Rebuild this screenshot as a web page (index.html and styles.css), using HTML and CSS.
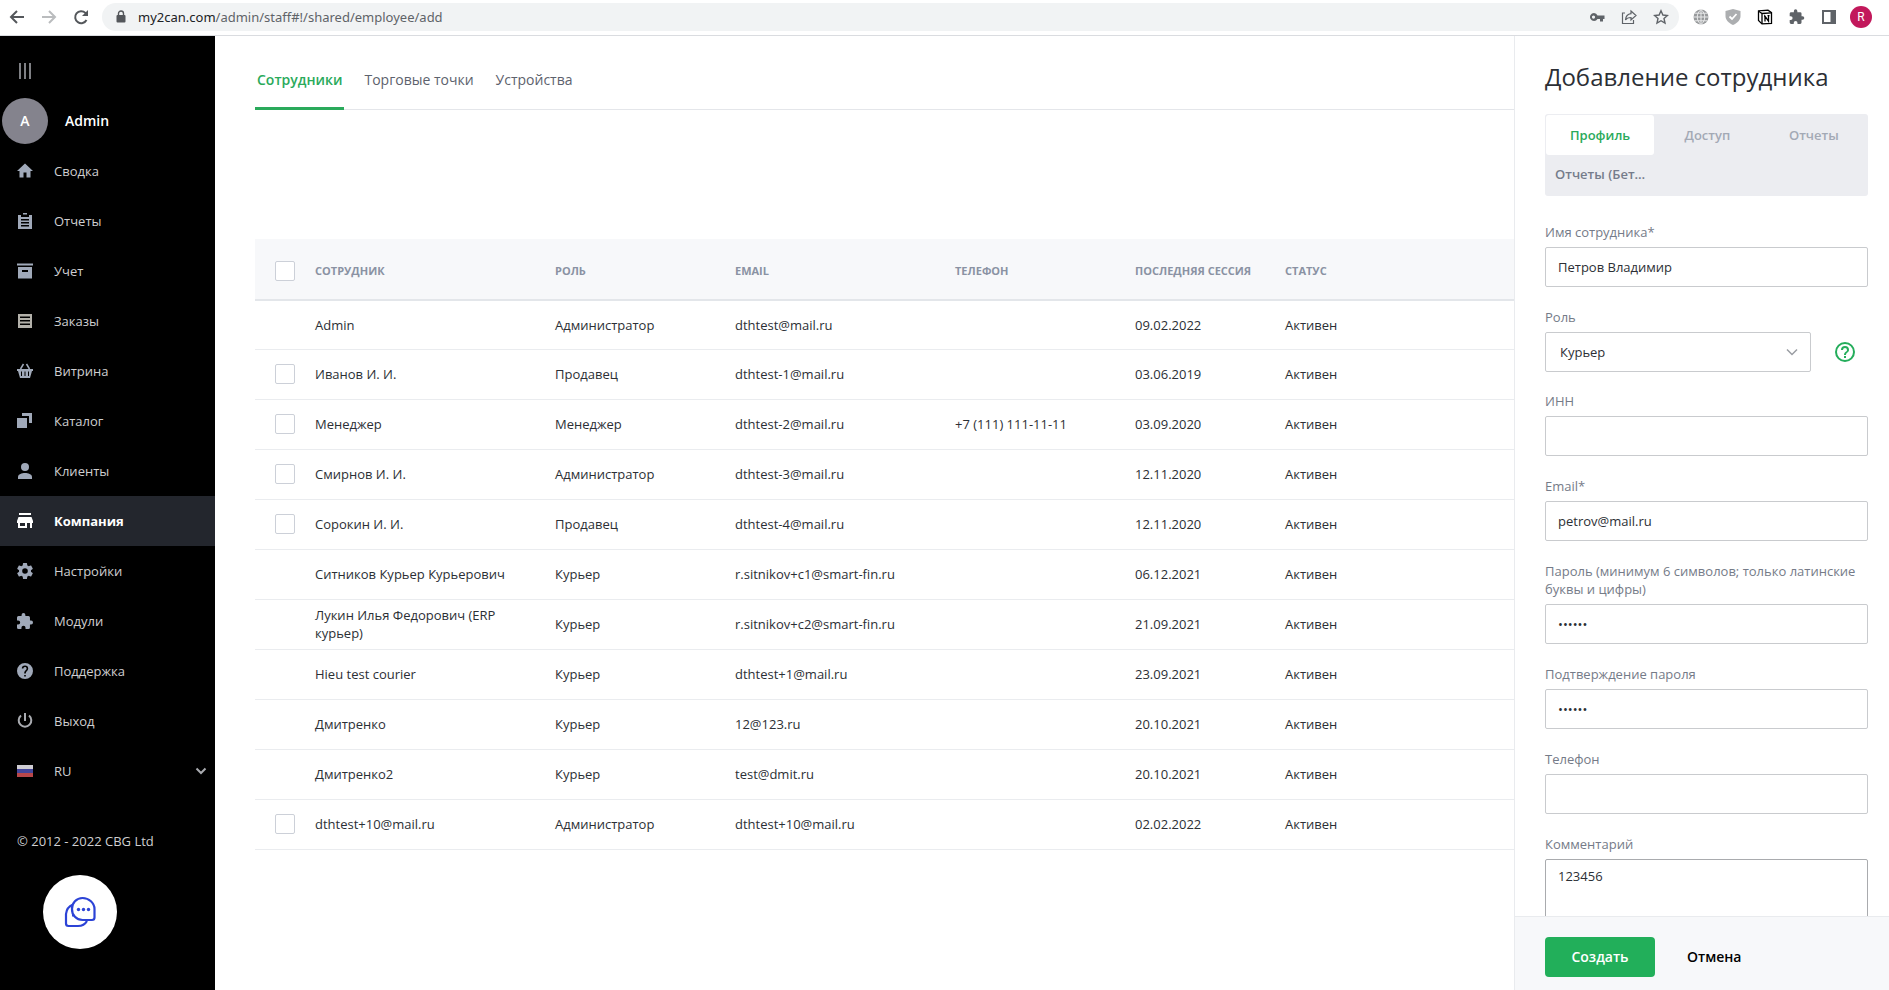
FILE: index.html
```html
<!DOCTYPE html>
<html lang="ru">
<head>
<meta charset="utf-8">
<title>Сотрудники</title>
<link rel="stylesheet" href="styles.css">
</head>
<body>
<header class="browser">
  <button class="nav-btn" aria-label="Назад"><svg width="18" height="18" viewBox="0 0 18 18" fill="none" stroke="#54575b" stroke-width="2"><path d="M16 9H3M9 3L3 9l6 6"/></svg></button>
  <button class="nav-btn" aria-label="Вперед"><svg width="18" height="18" viewBox="0 0 18 18" fill="none" stroke="#babcbe" stroke-width="2"><path d="M2 9h13M9 3l6 6-6 6"/></svg></button>
  <button class="nav-btn" aria-label="Обновить"><svg width="18" height="18" viewBox="0 0 18 18" fill="none" stroke="#54575b" stroke-width="2"><path d="M14.5 12A6 6 0 1 1 13.4 4.9L15 6.5"/><path d="M16 2v6h-6z" fill="#54575b" stroke="none"/></svg></button>
  <div class="address">
    <svg width="10" height="14" viewBox="0 0 10 14"><rect x="0.5" y="5" width="9" height="7.500" rx="1" fill="#54575b"/><path d="M2.500 5.500V3.500a2.500 2.500 0 0 1 5 0v2" fill="none" stroke="#54575b" stroke-width="1.400"/></svg>
    <span class="url"><span class="host">my2can.com</span>/admin/staff#!/shared/employee/add</span>
    <svg width="16" height="16" viewBox="0 0 16 16" fill="#5f6368"><path fill-rule="evenodd" d="M5 4a4 4 0 1 0 3.500 6H11v2.500h3V10h1.500V6.500h-7A4 4 0 0 0 5 4zM4.500 6.500a1.600 1.600 0 1 1 0 3.200 1.600 1.600 0 0 1 0-3.200z"/></svg>
    <svg width="16" height="16" viewBox="0 0 16 16" fill="none" stroke="#5f6368" stroke-width="1.200"><path d="M4 4H1.500v10.500h11V11M10 2l5 4.500-5 4.500V8.500c-3 0-4.500.8-5.500 2.500.3-4 2.500-6 5.500-6.300z"/></svg>
    <svg width="16" height="16" viewBox="0 0 16 16" fill="none" stroke="#5f6368" stroke-width="1.400"><path d="M8 1.800l1.900 4.200 4.500.5-3.400 3 1 4.500L8 11.700 4 14l1-4.500-3.400-3L6.100 6z"/></svg>
  </div>
  <div class="extensions">
    <svg width="16" height="16" viewBox="0 0 16 16"><circle cx="8" cy="8" r="7.500" fill="#97999b"/><path d="M8 0v16M0 8h16M1.500 4.200h13M1.500 11.800h13M8 .5c-5 4-5 11 0 15M8 .5c5 4 5 11 0 15" fill="none" stroke="#e8e9ea"/></svg>
    <svg width="16" height="16" viewBox="0 0 16 16"><path d="M8 0l7.500 2v5c0 4-3 7-7.500 9C3.500 14 .5 11 .5 7V2z" fill="#acaeb0"/><path d="M4.500 7.500l2.500 2.500 4.500-5" fill="none" stroke="#fff" stroke-width="1.800"/></svg>
    <svg width="16" height="16" viewBox="0 0 16 16" fill="#fff" stroke="#000" stroke-width="1.300"><path d="M1.500 2l9.500-.8 3.500 2.500V14.500l-9.500.4-3.500-3.500z"/><path d="M1.500 2L5 4.500l9.500-.6M5 4.500V15"/><path d="M8 12.500V7.200l3.500 5V6.700M7 7.200h1.500M10.500 6.700h2" fill="none"/></svg>
    <svg width="16" height="16" viewBox="1 1 23 22" fill="#5f6368"><path d="M20.500 11H19V7a2 2 0 0 0-2-2h-4V3.500a2.500 2.500 0 0 0-5 0V5H4a2 2 0 0 0-2 2v3.800h1.500a2.700 2.700 0 0 1 0 5.400H2V20a2 2 0 0 0 2 2h3.800v-1.500a2.700 2.700 0 0 1 5.400 0V22H17a2 2 0 0 0 2-2v-4h1.500a2.500 2.500 0 0 0 0-5z"/></svg>
    <svg width="16" height="16" viewBox="0 0 16 16"><path d="M2 2h12v12H2z" fill="none" stroke="#5f6368" stroke-width="2"/><path d="M9.500 2H14v12H9.500z" fill="#5f6368"/></svg>
  </div>
  <span class="profile">R</span>
</header>
<div class="app">
  <nav class="sidebar">
    <button class="burger" aria-label="Меню"><svg width="14" height="16" viewBox="0 0 14 16" stroke="#a9abb0" stroke-width="1.500"><path d="M2 0v16M7 0v16M12 0v16"/></svg></button>
    <div class="user"><span class="avatar">A</span><span>Admin</span></div>
    <a class="item" href="#"><svg viewBox="0 0 16 16"><path d="M8 .5L0 8h2.500v6.500h4v-5h3v5h4V8H16z"/></svg>Сводка</a>
    <a class="item" href="#"><svg viewBox="0 0 16 16"><path fill-rule="evenodd" d="M6 0h4v1.500H6zM1 2h3v2h8V2h3v14H1zM4 6v1.500h8V6zM4 9v1.500h8V9zM4 12v1.500h8V12z"/></svg>Отчеты</a>
    <a class="item" href="#"><svg viewBox="0 0 16 16"><path fill-rule="evenodd" d="M0 .5h16v2H0zM1 4h14v11.500H1zM5 7v2h6V7z"/></svg>Учет</a>
    <a class="item orders" href="#"><svg viewBox="0 0 16 16"><path fill-rule="evenodd" d="M1 1h14v14H1zM3 3.500V5h10V3.500zM3 7v1.500h10V7zM3 10.500V12h10v-1.500z"/></svg>Заказы</a>
    <a class="item" href="#"><svg viewBox="0 0 16 16"><path fill-rule="evenodd" d="M0 6h16v2h-1l-2 7H3L1 8H0zM4 8.500V13h1V8.500zM7.500 8.500V13h1V8.500zM11 8.500V13h1V8.500z"/><path d="M3.500 6l3-5M12.500 6l-3-5" fill="none" stroke="currentColor" stroke-width="1.500"/></svg>Витрина</a>
    <a class="item" href="#"><svg viewBox="0 0 16 16"><path d="M0 5h10v10H0zM5 0h10v10h-3V3H5z"/></svg>Каталог</a>
    <a class="item" href="#"><svg viewBox="0 0 16 16"><circle cx="8" cy="4" r="4"/><path d="M1 16v-2c0-3 4-4 7-4s7 1 7 4v2z"/></svg>Клиенты</a>
    <a class="item active" href="#"><svg viewBox="0 0 16 16"><path fill-rule="evenodd" d="M2 0h12v2H2zM1.500 4h13L16 8v2h-1v5h-2v-5h-3v5H1v-5H0V8zM3 10v3h5v-3z"/></svg>Компания</a>
    <a class="item" href="#"><svg viewBox="2 2 20 20"><path d="M19.430 12.980c.04-.320.070-.640.070-.980s-.03-.660-.07-.980l2.110-1.650a.5.5 0 0 0 .12-.640l-2-3.460a.5.5 0 0 0-.61-.220l-2.490 1c-.52-.400-1.080-.730-1.690-.980l-.38-2.650A.5.5 0 0 0 14 2h-4a.5.5 0 0 0-.49.420l-.38 2.650c-.61.250-1.170.590-1.690.980l-2.490-1a.5.5 0 0 0-.61.220l-2 3.460a.5.5 0 0 0 .12.640l2.110 1.650a8 8 0 0 0 0 1.960l-2.110 1.650a.5.5 0 0 0-.12.640l2 3.460c.12.220.39.300.61.220l2.490-1c.52.400 1.080.730 1.690.980l.38 2.650c.03.240.24.420.49.420h4c.25 0 .46-.18.49-.420l.38-2.650c.61-.250 1.170-.590 1.690-.980l2.490 1c.23.090.49 0 .61-.220l2-3.460a.5.5 0 0 0-.12-.640zM12 15.500a3.500 3.500 0 1 1 0-7 3.500 3.500 0 0 1 0 7z"/></svg>Настройки</a>
    <a class="item" href="#"><svg viewBox="2 1 21 21"><path d="M20.500 11H19V7a2 2 0 0 0-2-2h-4V3.500a2.500 2.500 0 0 0-5 0V5H4a2 2 0 0 0-2 2v3.800h1.500a2.700 2.700 0 0 1 0 5.400H2V20a2 2 0 0 0 2 2h3.800v-1.500a2.700 2.700 0 0 1 5.400 0V22H17a2 2 0 0 0 2-2v-4h1.500a2.500 2.500 0 0 0 0-5z"/></svg>Модули</a>
    <a class="item" href="#"><svg viewBox="2 2 20 20"><path d="M12 2a10 10 0 1 0 0 20 10 10 0 0 0 0-20zm1 17h-2v-2h2zm2.070-7.750l-.9.920C13.450 12.900 13 13.500 13 15h-2v-.5c0-1.100.45-2.100 1.170-2.830l1.240-1.260A2 2 0 1 0 10 9H8a4 4 0 0 1 8 0c0 .880-.36 1.680-.93 2.250z"/></svg>Поддержка</a>
    <a class="item" href="#"><svg viewBox="0 0 16 16" class="line"><path d="M8 0v8M4 2.500a6.300 6.300 0 1 0 8 0"/></svg>Выход</a>
    <button class="item lang"><svg viewBox="0 0 16 16"><path d="M0 2h16v4H0z" fill="#cfcdd3"/><path d="M0 6h16v4H0z" fill="#44459a"/><path d="M0 10h16v4H0z" fill="#b8474a"/></svg>RU<svg class="chevron line" viewBox="0 0 16 16"><path d="M3.500 5.500L8 10l4.500-4.500"/></svg></button>
    <p class="copyright">© 2012 - 2022 CBG Ltd</p>
    <button class="chat" aria-label="Чат"><svg width="32" height="32" viewBox="0 0 32 32" fill="none" stroke="#2c43d6" stroke-width="2.200"><path d="M9 8.500A11.500 11.500 0 0 0 2 18v9.500a2.500 2.500 0 0 0 2.500 2.500H14c4 0 7-1.500 9-5"/><path d="M18.500 2C25 2 30.500 7 30.500 13v8.500a2.500 2.500 0 0 1-2.500 2.500h-9.500A10.500 10.500 0 0 1 8 13 10.500 10.500 0 0 1 18.500 2z"/><path d="M8 19.500h1.500" /><g fill="#2c43d6" stroke="none"><circle cx="14.500" cy="13.500" r="1.700"/><circle cx="19.500" cy="13.500" r="1.700"/><circle cx="24.500" cy="13.500" r="1.700"/></g></svg></button>
  </nav>
  <main class="content">
    <nav class="tabs">
      <a class="tab current" href="#">Сотрудники</a>
      <a class="tab" href="#">Торговые точки</a>
      <a class="tab" href="#">Устройства</a>
    </nav>
    <table class="staff">
      <colgroup><col class="c-check"><col class="c-name"><col class="c-role"><col class="c-mail"><col class="c-phone"><col class="c-date"><col></colgroup>
      <thead><tr><th><input type="checkbox" aria-label="Выбрать всех"></th><th>СОТРУДНИК</th><th>РОЛЬ</th><th>EMAIL</th><th>ТЕЛЕФОН</th><th>ПОСЛЕДНЯЯ СЕССИЯ</th><th>СТАТУС</th></tr></thead>
      <tbody>
        <tr><td></td><td>Admin</td><td>Администратор</td><td>dthtest@mail.ru</td><td></td><td>09.02.2022</td><td>Активен</td></tr>
        <tr><td><input type="checkbox" aria-label="Иванов И. И."></td><td>Иванов И. И.</td><td>Продавец</td><td>dthtest-1@mail.ru</td><td></td><td>03.06.2019</td><td>Активен</td></tr>
        <tr><td><input type="checkbox" aria-label="Менеджер"></td><td>Менеджер</td><td>Менеджер</td><td>dthtest-2@mail.ru</td><td>+7 (111) 111-11-11</td><td>03.09.2020</td><td>Активен</td></tr>
        <tr><td><input type="checkbox" aria-label="Смирнов И. И."></td><td>Смирнов И. И.</td><td>Администратор</td><td>dthtest-3@mail.ru</td><td></td><td>12.11.2020</td><td>Активен</td></tr>
        <tr><td><input type="checkbox" aria-label="Сорокин И. И."></td><td>Сорокин И. И.</td><td>Продавец</td><td>dthtest-4@mail.ru</td><td></td><td>12.11.2020</td><td>Активен</td></tr>
        <tr><td></td><td>Ситников Курьер Курьерович</td><td>Курьер</td><td>r.sitnikov+c1@smart-fin.ru</td><td></td><td>06.12.2021</td><td>Активен</td></tr>
        <tr><td></td><td>Лукин Илья Федорович (ERP курьер)</td><td>Курьер</td><td>r.sitnikov+c2@smart-fin.ru</td><td></td><td>21.09.2021</td><td>Активен</td></tr>
        <tr><td></td><td>Hieu test courier</td><td>Курьер</td><td>dthtest+1@mail.ru</td><td></td><td>23.09.2021</td><td>Активен</td></tr>
        <tr><td></td><td>Дмитренко</td><td>Курьер</td><td>12@123.ru</td><td></td><td>20.10.2021</td><td>Активен</td></tr>
        <tr><td></td><td>Дмитренко2</td><td>Курьер</td><td>test@dmit.ru</td><td></td><td>20.10.2021</td><td>Активен</td></tr>
        <tr><td><input type="checkbox" aria-label="dthtest+10@mail.ru"></td><td>dthtest+10@mail.ru</td><td>Администратор</td><td>dthtest+10@mail.ru</td><td></td><td>02.02.2022</td><td>Активен</td></tr>
      </tbody>
    </table>
  </main>
  <form class="panel">
    <div class="panel-body">
      <h1>Добавление сотрудника</h1>
      <div class="switch">
        <button type="button" class="on">Профиль</button>
        <button type="button">Доступ</button>
        <button type="button">Отчеты</button>
        <button type="button" class="beta">Отчеты (Бет…</button>
      </div>
      <label for="name">Имя сотрудника*</label>
      <input id="name" type="text" value="Петров Владимир">
      <label for="role">Роль</label>
      <div class="role-row">
        <div class="select">
          <select id="role"><option>Курьер</option></select>
          <svg width="12" height="12" viewBox="0 0 12 12" fill="none" stroke="#9a9da3" stroke-width="1.500"><path d="M1 3.500l5 5 5-5"/></svg>
        </div>
        <button type="button" class="help" aria-label="Справка"><svg width="20" height="20" viewBox="2 2 20 20" fill="#24ad5b"><path d="M11 18h2v-2h-2zm1-16a10 10 0 1 0 0 20 10 10 0 0 0 0-20zm0 18a8 8 0 1 1 0-16 8 8 0 0 1 0 16zm0-14a4 4 0 0 0-4 4h2a2 2 0 1 1 4 0c0 2-3 1.750-3 5h2c0-2.250 3-2.500 3-5a4 4 0 0 0-4-4z"/></svg></button>
      </div>
      <label for="inn">ИНН</label>
      <input id="inn" type="text">
      <label for="email">Email*</label>
      <input id="email" type="text" value="petrov@mail.ru">
      <label for="pass">Пароль (минимум 6 символов; только латинские буквы и цифры)</label>
      <input id="pass" type="password" value="123456">
      <label for="pass2">Подтверждение пароля</label>
      <input id="pass2" type="password" value="123456">
      <label for="phone">Телефон</label>
      <input id="phone" type="text">
      <label for="comment">Комментарий</label>
      <textarea id="comment">123456</textarea>
    </div>
    <footer class="actions">
      <button type="button" class="create">Создать</button>
      <button type="button" class="cancel">Отмена</button>
    </footer>
  </form>
</div>
</body>
</html>
```
FILE: styles.css
```css
* { box-sizing: border-box; }
body {
  margin: 0;
  height: 100vh;
  display: flex;
  flex-direction: column;
  overflow: hidden;
  background: #fff;
  color: #2c2f35;
  font: 13px/18px "Open Sans", sans-serif;
}
button, input, select, textarea { font: inherit; color: inherit; }
button { padding: 0; border: 0; background: none; }
a { color: inherit; text-decoration: none; }
svg { flex: none; }

.browser {
  flex: none;
  display: flex;
  align-items: center;
  height: 36px;
  padding: 0 17px 2px 8px;
  border-bottom: 1px solid #dadce0;
}
.nav-btn { display: flex; margin-right: 14px; }
.nav-btn:nth-of-type(3) { margin-right: 12px; }
.address {
  flex: 1;
  display: flex;
  align-items: center;
  gap: 16px;
  height: 28px;
  padding: 0 10px 0 14px;
  border-radius: 14px;
  background: #f1f3f4;
}
.url { flex: 1; margin-left: -4px; font-family: "Noto Sans", sans-serif; color: #5f6368; }
.host { color: #202124; }
.extensions { display: flex; align-items: center; gap: 16px; margin: 0 13px 0 14px; }
.profile {
  width: 22px;
  height: 22px;
  border-radius: 50%;
  background: #c2185b;
  color: #fff;
  font: 12px/22px Roboto, sans-serif;
  text-align: center;
}

.app { flex: 1; min-height: 0; display: flex; }
.sidebar {
  flex: none;
  width: 215px;
  background: #000;
  color: #cfcfd1;
}
.burger { display: flex; padding: 27px 18px 19px; }
.user {
  display: flex;
  align-items: center;
  gap: 17px;
  padding: 0 2px 2px;
  color: #fff;
  font-size: 14px;
  font-weight: 600;
}
.avatar {
  width: 46px;
  height: 46px;
  border-radius: 50%;
  background: #84838d;
  line-height: 46px;
  text-align: center;
}
.item {
  display: flex;
  align-items: center;
  gap: 21px;
  width: 100%;
  height: 50px;
  padding: 0 6px 0 17px;
}
.item svg { width: 16px; height: 16px; fill: #a0a9b9; color: #a0a9b9; }
.item.orders svg { fill: #b3b1aa; }
.item.active { background: #23262d; color: #fff; font-weight: 700; }
.item.active svg { fill: #fff; }
.item svg.line { fill: none; stroke: #a9abb0; stroke-width: 2; }
.item .chevron { margin-left: auto; }
.copyright { margin: 36px 17px 25px; }
.chat {
  display: flex;
  align-items: center;
  justify-content: center;
  width: 74px;
  height: 74px;
  margin-left: 43px;
  border-radius: 50%;
  background: #fff;
}

.content { flex: 1; min-width: 0; overflow: hidden; padding-left: 40px; }
.tabs {
  display: flex;
  gap: 18px;
  height: 74px;
  margin-bottom: 129px;
  border-bottom: 1px solid #e4e6ea;
  font-size: 14px;
  color: #5d626d;
}
.tab { height: 74px; padding: 35px 2px 0; }
.tab.current { border-bottom: 3px solid #2aaa5b; color: #2aaa5b; font-weight: 600; }

.staff { width: 100%; table-layout: fixed; border-collapse: separate; border-spacing: 0; }
.c-check { width: 60px; }
.c-name { width: 240px; }
.c-role, .c-phone { width: 180px; }
.c-mail { width: 220px; }
.c-date { width: 150px; }
.staff th {
  height: 62px;
  padding: 4px 0 0;
  border-bottom: 2px solid #e3e6ea;
  background: #f7f8fa;
  color: #8a92a3;
  font-size: 11px;
  font-weight: 700;
  text-align: left;
  white-space: nowrap;
}
.staff td { height: 50px; padding: 0 40px 1px 0; border-bottom: 1px solid #eaecef; }
.staff tr:first-child td { height: 49px; }
.staff td:first-child, .staff th:first-child { padding-left: 20px; padding-right: 0; }
.staff td:nth-child(4), .staff td:nth-child(5) { padding-right: 0; }
.staff input {
  appearance: none;
  display: block;
  width: 20px;
  height: 20px;
  margin: 0;
  border: 1px solid #ccd0d8;
  border-radius: 2px;
  background: #fff;
}

.panel {
  flex: none;
  display: flex;
  flex-direction: column;
  width: 375px;
  border-left: 1px solid #e9ebee;
}
.panel-body { flex: 1; min-height: 0; overflow: hidden; padding: 25px 21px 0 30px; }
h1 { margin: 0 0 21px; font-size: 24px; line-height: 32px; font-weight: 400; }
.switch {
  display: grid;
  grid-template-columns: repeat(3, 1fr);
  margin-bottom: 27px;
  padding: 1px;
  border-radius: 3px;
  background: #ecedf1;
  color: #a3a9b5;
}
.switch button {
  height: 40px;
  padding: 0 9px;
  border-radius: 3px;
  font-weight: 600;
  white-space: nowrap;
}
.switch .on { background: #fff; color: #2aaa5b; }
.switch .beta { padding-bottom: 2px; color: #757c8b; text-align: left; }
label { display: block; margin-bottom: 6px; color: #757b88; }
.panel input, .panel select, .panel textarea {
  display: block;
  width: 100%;
  height: 40px;
  margin: 0 0 21px;
  padding: 0 12px;
  border: 1px solid #c9cbce;
  border-radius: 2px;
  background: #fff;
  outline: none;
}
.role-row { display: flex; gap: 24px; margin-bottom: 20px; }
.select { flex: 1; display: grid; align-items: center; }
.select > * { grid-area: 1 / 1; }
.select svg { justify-self: end; margin-right: 13px; pointer-events: none; }
.panel select { margin: 0; padding: 0 14px; appearance: none; }
.help { display: flex; align-items: center; margin-right: 13px; }
.panel textarea { height: 100px; padding: 7px 12px; border-color: #a9abae; resize: none; }
.actions {
  flex: none;
  display: flex;
  gap: 32px;
  height: 74px;
  padding: 20px 30px 0;
  border-top: 1px solid #e9ebee;
  background: #f7f8fa;
  font-size: 14px;
  font-weight: 600;
}
.create { width: 110px; height: 40px; border-radius: 4px; background: #22af5a; color: #fff; }
.cancel { height: 40px; color: #000; }
```
